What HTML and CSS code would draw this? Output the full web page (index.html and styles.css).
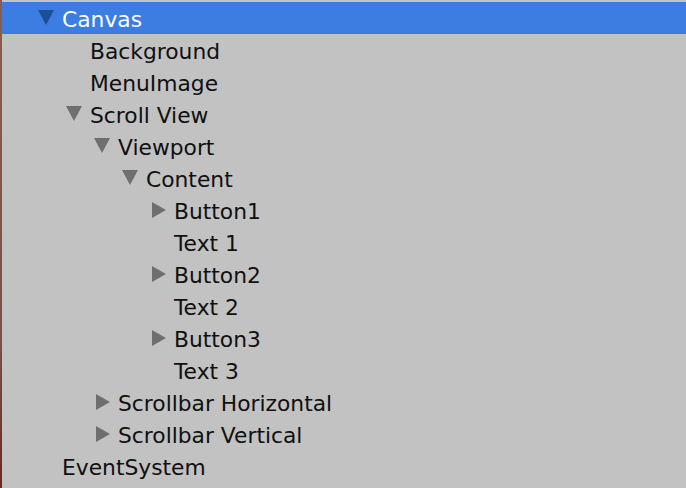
FILE: index.html
```html
<!DOCTYPE html>
<html>
<head>
<meta charset="utf-8">
<link rel="stylesheet" href="styles.css">
</head>
<body>
<div class="panel">
  <div class="edge"></div>
  <ul class="tree">
    <li class="row selected lvl0"><span class="arrow down"></span><span class="label">Canvas</span></li>
    <li class="row lvl1"><span class="arrow none"></span><span class="label">Background</span></li>
    <li class="row lvl1"><span class="arrow none"></span><span class="label">MenuImage</span></li>
    <li class="row lvl1"><span class="arrow down"></span><span class="label">Scroll View</span></li>
    <li class="row lvl2"><span class="arrow down"></span><span class="label">Viewport</span></li>
    <li class="row lvl3"><span class="arrow down"></span><span class="label">Content</span></li>
    <li class="row lvl4"><span class="arrow right"></span><span class="label">Button1</span></li>
    <li class="row lvl4"><span class="arrow none"></span><span class="label">Text 1</span></li>
    <li class="row lvl4"><span class="arrow right"></span><span class="label">Button2</span></li>
    <li class="row lvl4"><span class="arrow none"></span><span class="label">Text 2</span></li>
    <li class="row lvl4"><span class="arrow right"></span><span class="label">Button3</span></li>
    <li class="row lvl4"><span class="arrow none"></span><span class="label">Text 3</span></li>
    <li class="row lvl2"><span class="arrow right"></span><span class="label">Scrollbar Horizontal</span></li>
    <li class="row lvl2"><span class="arrow right"></span><span class="label">Scrollbar Vertical</span></li>
    <li class="row lvl0"><span class="arrow none"></span><span class="label">EventSystem</span></li>
  </ul>
</div>
</body>
</html>
```
FILE: styles.css
```css
html, body {
  margin: 0;
  padding: 0;
  background: #c2c2c2;
}
.panel {
  display: flex;
  width: 686px;
  height: 488px;
  overflow: hidden;
  background: #c2c2c2;
}
.edge {
  width: 2px;
  flex: none;
  background: linear-gradient(#8b5d4c, #7a5048 70%, #6a2a22);
}
.tree {
  list-style: none;
  margin: 0;
  padding: 2px 0 0 0;
  flex: 1;
  font-family: "DejaVu Sans", sans-serif;
  font-size: 21.8px;
  color: #101010;
}
.row {
  display: flex;
  align-items: center;
  height: 32px;
}
.row.selected {
  background: #3c7de2;
  color: #ffffff;
}
.lvl0 { padding-left: 36px; }
.lvl1 { padding-left: 64px; }
.lvl2 { padding-left: 92px; }
.lvl3 { padding-left: 120px; }
.lvl4 { padding-left: 148px; }
.arrow {
  width: 24px;
  height: 16px;
  flex: none;
  position: relative;
}
.arrow.down::before {
  content: "";
  position: absolute;
  left: 0;
  top: 0;
  border-left: 8px solid transparent;
  border-right: 8px solid transparent;
  border-top: 15px solid #6f6f6f;
}
.selected .arrow.down::before {
  border-top-color: #1f4e98;
}
.arrow.right::before {
  content: "";
  position: absolute;
  left: 2px;
  top: 0;
  border-top: 8px solid transparent;
  border-bottom: 8px solid transparent;
  border-left: 14px solid #6f6f6f;
}
.label {
  white-space: nowrap;
  line-height: 32px;
  padding-top: 2px;
  height: 32px;
  box-sizing: border-box;
}
```
